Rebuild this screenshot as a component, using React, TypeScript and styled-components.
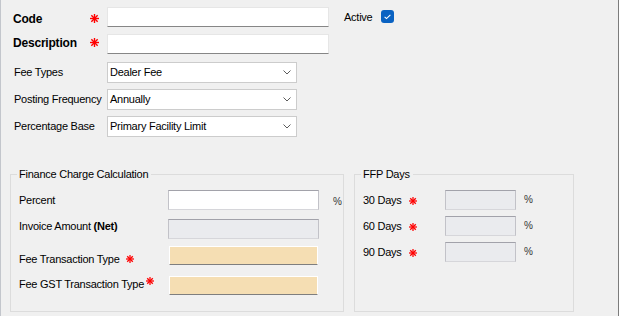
import React from "react";
import styled, { createGlobalStyle } from "styled-components";

const GlobalStyle = createGlobalStyle`
  html, body { margin: 0; padding: 0; background: #f0f0f0; }
  body { font-family: "Liberation Sans", Arial, sans-serif; }
  * { box-sizing: border-box; }
`;

const Window = styled.div`
  width: 619px;
  height: 316px;
  background: #f0f0f0;
  border-left: 1px solid #c3c6cc;
  border-right: 1px solid #7c7c7c;
  padding: 7px 0 0 9px;
  font-size: 11px;
  line-height: 13px;
  letter-spacing: -0.25px;
  color: #000;
  overflow: hidden;
`;

const TopSection = styled.div`
  padding-left: 3px;
  display: flex;
  flex-direction: column;
`;

const FieldRow = styled.div<{ $mt?: number; $center?: boolean }>`
  display: flex;
  align-items: ${(p) => (p.$center ? "center" : "flex-start")};
  margin-top: ${(p) => p.$mt ?? 0}px;
`;

const BoldLabel = styled.div<{ $offset: number }>`
  width: 77px;
  font-weight: bold;
  font-size: 12px;
  letter-spacing: -0.2px;
  margin-top: ${(p) => p.$offset}px;
`;

const ReqMark = styled.svg<{ $mt?: number; $ml?: number; $mr?: number }>`
  display: block;
  flex: none;
  margin-top: ${(p) => p.$mt ?? 0}px;
  margin-left: ${(p) => p.$ml ?? 0}px;
  margin-right: ${(p) => p.$mr ?? 0}px;
`;

const Req = ({ size = 8, mt, ml, mr }: { size?: number; mt?: number; ml?: number; mr?: number }) => (
  <ReqMark width={size} height={size} viewBox="0 0 8 8" $mt={mt} $ml={ml} $mr={mr}>
    <g stroke="#ff0000" strokeWidth="1.25" strokeLinecap="butt">
      <path d="M4 0V8" />
      <path d="M0 4H8" />
      <path d="M1.2 1.2L6.8 6.8" />
      <path d="M6.8 1.2L1.2 6.8" />
    </g>
  </ReqMark>
);

const TextBox = styled.div<{ $w: number }>`
  width: ${(p) => p.$w}px;
  height: 20px;
  background: #fff;
  border: 1px solid #e6e6e6;
  border-bottom: 1px solid #868686;
`;

const ActiveLabel = styled.div`
  margin-left: 15px;
  margin-top: 4px;
`;

const CheckBox = styled.span`
  width: 13px;
  height: 13px;
  border-radius: 3px;
  background: #0a62c2;
  display: flex;
  align-items: center;
  justify-content: center;
  margin-left: 9px;
  margin-top: 3px;
`;

const SelectLabel = styled.div`
  width: 94px;
  padding-left: 1px;
  white-space: nowrap;
`;

const Select = styled.div`
  width: 190px;
  height: 21px;
  background: #fff;
  border: 1px solid #cccccc;
  display: flex;
  align-items: center;
  justify-content: space-between;
  padding: 0 5px 0 2px;
`;

const Groups = styled.div`
  display: flex;
  gap: 10px;
  margin-top: 31px;
`;

const Group = styled.fieldset<{ $w: number }>`
  width: ${(p) => p.$w}px;
  height: 144px;
  margin: 0;
  padding: 0 0 0 8px;
  border: 1px solid #dcdcdc;
  min-width: 0;
`;

const Caption = styled.legend`
  padding: 0 3px 0 2px;
  margin-left: -2px;
  line-height: 13px;
`;

const GroupBody = styled.div<{ $pt: number }>`
  padding-top: ${(p) => p.$pt}px;
  display: flex;
  flex-direction: column;
`;

const CalcLabel = styled.div<{ $offset: number }>`
  width: 149px;
  display: flex;
  align-items: flex-start;
  white-space: nowrap;
  margin-top: ${(p) => p.$offset}px;
`;

const DaysLabel = styled.div`
  width: 82px;
  display: flex;
  align-items: center;
  white-space: nowrap;
`;

const FlatBox = styled.div<{ $w: number; $disabled?: boolean }>`
  width: ${(p) => p.$w}px;
  height: 20px;
  background: ${(p) => (p.$disabled ? "#eaebee" : "#ffffff")};
  border: 1px solid;
  border-color: #a2a2aa #c2c2c8 #d6d6da #c2c2c8;
`;

const PeachBox = styled.div`
  width: 149px;
  height: 19px;
  margin-left: 1px;
  background: #f5deb3;
  border: 1px solid #ffffff;
  border-bottom: 1px solid #7e7e7e;
`;

const Unit = styled.div<{ $ml: number; $mt: number }>`
  margin-left: ${(p) => p.$ml}px;
  margin-top: ${(p) => p.$mt}px;
  font-size: 10px;
  color: #333;
  letter-spacing: 0;
`;

const Chevron = () => (
  <svg width="8" height="5" viewBox="0 0 8 5">
    <path d="M0.5 0.5L4 4L7.5 0.5" fill="none" stroke="#5c5c5c" strokeWidth="1" />
  </svg>
);

const selects = [
  { label: "Fee Types", value: "Dealer Fee", mt: 8 },
  { label: "Posting Frequency", value: "Annually", mt: 6 },
  { label: "Percentage Base", value: "Primary Facility Limit", mt: 6 },
];

const days = [
  { label: "30 Days", mt: 0 },
  { label: "60 Days", mt: 6 },
  { label: "90 Days", mt: 6 },
];

export default function App() {
  return (
    <>
      <GlobalStyle />
      <Window>
        <TopSection>
          <FieldRow>
            <BoldLabel $offset={6}>Code</BoldLabel>
            <Req size={9} mt={7} mr={8} />
            <TextBox $w={222} />
            <ActiveLabel>Active</ActiveLabel>
            <CheckBox>
              <svg width="13" height="13" viewBox="0 0 13 13">
                <path d="M3.6 6.8L5.5 8.6L9.4 4.8" fill="none" stroke="#fff" strokeWidth="1.1" />
              </svg>
            </CheckBox>
          </FieldRow>
          <FieldRow $mt={7}>
            <BoldLabel $offset={3}>Description</BoldLabel>
            <Req size={9} mt={4} mr={8} />
            <TextBox $w={222} />
          </FieldRow>
          {selects.map((s) => (
            <FieldRow key={s.label} $mt={s.mt} $center>
              <SelectLabel>{s.label}</SelectLabel>
              <Select>
                <span>{s.value}</span>
                <Chevron />
              </Select>
            </FieldRow>
          ))}
        </TopSection>
        <Groups>
          <Group $w={334}>
            <Caption>Finance Charge Calculation</Caption>
            <GroupBody $pt={9}>
              <FieldRow>
                <CalcLabel $offset={4}>Percent</CalcLabel>
                <FlatBox $w={151} />
                <Unit $ml={14} $mt={5}>%</Unit>
              </FieldRow>
              <FieldRow $mt={9}>
                <CalcLabel $offset={1}>
                  Invoice Amount&nbsp;<b>(Net)</b>
                </CalcLabel>
                <FlatBox $w={151} $disabled />
              </FieldRow>
              <FieldRow $mt={7}>
                <CalcLabel $offset={7}>
                  Fee Transaction Type
                  <Req mt={2} ml={6} />
                </CalcLabel>
                <PeachBox />
              </FieldRow>
              <FieldRow $mt={10}>
                <CalcLabel $offset={2}>
                  Fee GST Transaction Type
                  <Req mt={-1} ml={2} />
                </CalcLabel>
                <PeachBox />
              </FieldRow>
            </GroupBody>
          </Group>
          <Group $w={220}>
            <Caption>FFP Days</Caption>
            <GroupBody $pt={9}>
              {days.map((d) => (
                <FieldRow key={d.label} $mt={d.mt} $center>
                  <DaysLabel>
                    {d.label}
                    <Req ml={7} mt={1} />
                  </DaysLabel>
                  <FlatBox $w={71} $disabled />
                  <Unit $ml={8} $mt={-2}>%</Unit>
                </FieldRow>
              ))}
            </GroupBody>
          </Group>
        </Groups>
      </Window>
    </>
  );
}
